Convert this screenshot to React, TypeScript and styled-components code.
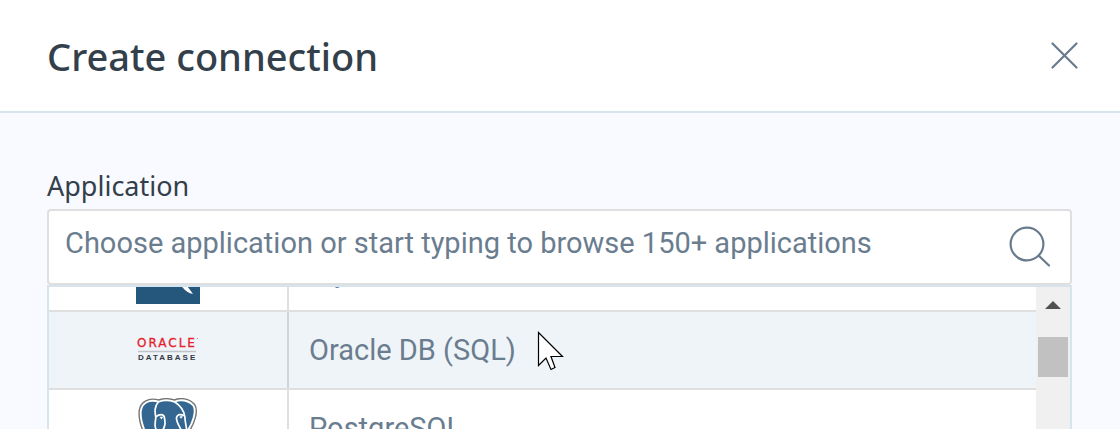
import React, { useLayoutEffect, useRef } from "react";
import styled, { createGlobalStyle } from "styled-components";

const color = {
  title: "#333f4a",
  text: "#6a7d8f",
  icon: "#687b8c",
  line: "#dfdfdf",
  accent: "#d6e4ee",
  page: "#f8faff",
  hover: "#eff4f8",
};

const ROW_HEIGHT = 78;

const GlobalStyle = createGlobalStyle`
  *, *::before, *::after { box-sizing: border-box; }
  body { margin: 0; background: ${color.page}; }
`;

const Dialog = styled.main`
  display: flex;
  flex-direction: column;
  height: 100vh;
  overflow: hidden;
  background: ${color.page};
  font-family: Roboto, sans-serif;
  font-size: 29px;
`;

const Header = styled.header`
  display: flex;
  align-items: flex-start;
  justify-content: space-between;
  flex: none;
  padding: 31px 32px 30px 47px;
  background: #fff;
  border-bottom: 2px solid ${color.accent};
`;

const Title = styled.h1`
  margin: 0;
  font-family: "Noto Sans", sans-serif;
  font-size: 38px;
  line-height: 50px;
  font-weight: 500;
  color: ${color.title};
`;

const IconButton = styled.button`
  display: flex;
  padding: 8px;
  border: 0;
  background: none;
  color: ${color.icon};
`;

const Form = styled.form`
  display: flex;
  flex-direction: column;
  flex: 1;
  min-height: 0;
  padding: 55px 48px 0 47px;
`;

const Label = styled.label`
  padding-bottom: 5px;
  font-family: "Noto Sans", sans-serif;
  font-size: 27px;
  line-height: 36px;
  color: ${color.title};
`;

const Field = styled.div`
  display: flex;
  align-items: center;
  flex: none;
  padding: 0 11px 0 16px;
  border: 2px solid ${color.line};
  border-radius: 4px;
  background: #fff;
`;

const SearchInput = styled.input`
  flex: 1;
  min-width: 0;
  height: 72px;
  padding: 0 0 8px;
  border: 0;
  outline: 0;
  background: none;
  font: inherit;
  color: ${color.text};
  &::placeholder { color: ${color.text}; opacity: 1; }
`;

const Dropdown = styled.div`
  display: flex;
  flex: 1;
  min-height: 0;
  border: 2px solid ${color.accent};
  border-bottom: 0;
  background: #fff;
`;

const Options = styled.ul`
  flex: 1;
  min-width: 0;
  margin: 0;
  padding: 0;
  overflow: hidden;
  list-style: none;
`;

const Option = styled.li<{ $active?: boolean }>`
  display: flex;
  height: ${ROW_HEIGHT}px;
  border-bottom: 2px solid ${color.line};
  background: ${(p) => (p.$active ? color.hover : "#fff")};
`;

const LogoCell = styled.span<{ $active?: boolean }>`
  display: flex;
  align-items: center;
  justify-content: center;
  width: 240px;
  border-right: 2px solid ${(p) => (p.$active ? "#d0d5d9" : color.line)};
`;

const OptionName = styled.span`
  padding-left: 20px;
  line-height: 76px;
  color: ${color.text};
`;

const ScrollTrack = styled.div`
  display: flex;
  flex-direction: column;
  align-items: center;
  width: 34px;
  background: #f0f0f0;
`;

const ScrollArrow = styled.svg`
  margin: 14px 0 28px;
`;

const ScrollThumb = styled.div`
  width: 30px;
  height: 40px;
  background: #c1c1c1;
`;

const Pointer = styled.svg`
  position: absolute;
  left: 537px;
  top: 331px;
`;

const MySqlLogo = () => (
  <svg width="64" height="64" viewBox="0 0 64 64" aria-hidden="true">
    <path d="M0 0H64V64H0Z" fill="#25567b" />
    <path d="M12 10C27 11 37 19 42 33C46 40 53 48 57 54C52 53 48 50 44 44C40 36 33 33 29 35C25 31 22 21 12 10Z" fill="#fff" />
  </svg>
);

const OracleLogo = () => (
  <svg width="64" height="32" viewBox="0 0 64 32" aria-hidden="true">
    <text x="1" y="13" fontFamily="DejaVu Sans, sans-serif" fontSize="12" letterSpacing="2" fill="#e5202b" stroke="#e5202b" strokeWidth="0.3">ORACLE</text>
    <path d="M2 17.500H60" stroke="#bfc3c7" strokeWidth="1.4" />
    <path d="M61 4.500H62" stroke="#ec6970" />
    <text x="2" y="26" fontFamily="Liberation Sans, sans-serif" fontSize="8" fontWeight="700" letterSpacing="2" fill="#333840">DATABASE</text>
  </svg>
);

const PostgresLogo = () => (
  <svg width="60" height="60" viewBox="0 0 64 64" aria-hidden="true">
    <path d="M22 4C12 1 4 5 3 14C2 25 9 44 17 48C20 49 23 45 26 42C28 48 27 60 35 61C44 61 43 50 44 43C52 45 59 40 60 38C56 38 53 38 52 36C58 28 63 14 59 8C54 2 45 1 39 4C33 2 27 2 22 4Z" fill="#336791" stroke="#747474" strokeWidth="5" />
    <path d="M22 4C12 1 4 5 3 14C2 25 9 44 17 48C20 49 23 45 26 42C28 48 27 60 35 61C44 61 43 50 44 43C52 45 59 40 60 38C56 38 53 38 52 36C58 28 63 14 59 8C54 2 45 1 39 4C33 2 27 2 22 4Z" fill="#336791" stroke="#fff" strokeWidth="2" />
    <g fill="none" stroke="#fff" strokeWidth="1.8">
      <path d="M22 4C17 9 18 15 19 21C18 28 17 32 22 37C24 39 26 40 26 43" />
      <path d="M39 4C45 8 49 13 50 20C50 26 52 31 52 36" />
      <path d="M19 20C23 17 27 17 28 20C29 25 30 30 25 36" />
      <path d="M50 19C45 17 42 17 41 21C41 27 45 31 48 38" />
    </g>
    <path d="M23 20L27 20L25 23Z" fill="#fff" />
    <path d="M44 20L48 19L46 22Z" fill="#fff" />
  </svg>
);

const applications = [
  { name: "MySQL", Logo: MySqlLogo, active: false },
  { name: "Oracle DB (SQL)", Logo: OracleLogo, active: true },
  { name: "PostgreSQL", Logo: PostgresLogo, active: false },
];

export default function App() {
  const options = useRef<HTMLUListElement>(null);

  // Keeps the highlighted option in view, just below the previous one's edge.
  useLayoutEffect(() => {
    if (options.current) options.current.scrollTop = ROW_HEIGHT - 25;
  }, []);

  return (
    <Dialog>
      <GlobalStyle />
      <Header>
        <Title>Create connection</Title>
        <IconButton type="button" aria-label="Close">
          <svg width="32" height="32" viewBox="0 0 32 32" fill="none" stroke="currentColor" strokeWidth="2.2" strokeLinecap="round">
            <path d="M4.500 4.500L28.500 28.500M28.500 4.500L4.500 28.500" />
          </svg>
        </IconButton>
      </Header>
      <Form>
        <Label htmlFor="application">Application</Label>
        <Field>
          <SearchInput
            id="application"
            type="text"
            role="combobox"
            aria-expanded="true"
            aria-controls="application-options"
            autoComplete="off"
            placeholder="Choose application or start typing to browse 150+ applications"
          />
          <IconButton type="button" aria-label="Search">
            <svg width="42" height="42" viewBox="0 0 42 42" fill="none" stroke="currentColor" strokeWidth="2.2" strokeLinecap="round">
              <circle cx="18" cy="18" r="16.4" />
              <path d="M29.800 29.800L40 39.500" />
            </svg>
          </IconButton>
        </Field>
        <Dropdown>
          <Options id="application-options" role="listbox" ref={options}>
            {applications.map(({ name, Logo, active }) => (
              <Option key={name} role="option" aria-selected={active} $active={active}>
                <LogoCell $active={active}>
                  <Logo />
                </LogoCell>
                <OptionName>{name}</OptionName>
              </Option>
            ))}
          </Options>
          <ScrollTrack>
            <ScrollArrow width="16" height="8" viewBox="0 0 16 8" aria-hidden="true">
              <path d="M0 8L8 0L16 8Z" fill="#505050" />
            </ScrollArrow>
            <ScrollThumb />
          </ScrollTrack>
        </Dropdown>
      </Form>
      <Pointer width="28" height="42" viewBox="0 0 28 42" aria-hidden="true">
        <path d="M1.500 1.500V34.500L9 27L14 38.500L18 36.500L14 25.500H25.500Z" fill="#fff" stroke="#000" strokeWidth="1.2" />
      </Pointer>
    </Dialog>
  );
}
